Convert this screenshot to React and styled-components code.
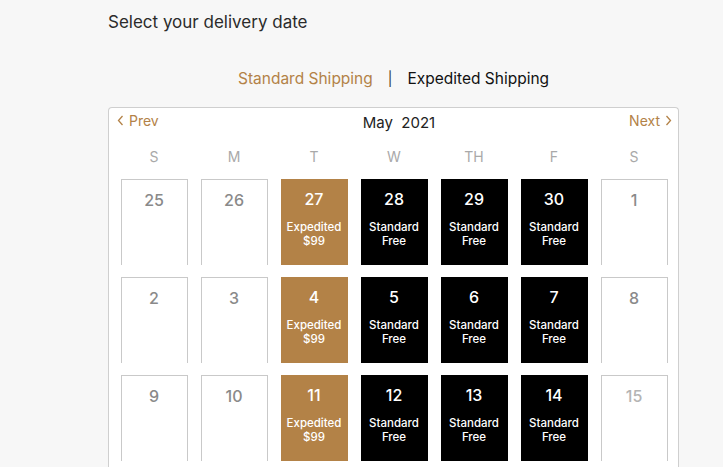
import React from 'react';
import styled, { createGlobalStyle } from 'styled-components';

const GlobalStyle = createGlobalStyle`
  body {
    margin: 0;
    background: #f7f7f7;
    font-family: Inter, "Liberation Sans", sans-serif;
    overflow: hidden;
  }
`;

const GOLD = '#b38247';

const weekDays = ['S', 'M', 'T', 'W', 'TH', 'F', 'S'];

const weeks = [
  [25, 26, 27, 28, 29, 30, 1],
  [2, 3, 4, 5, 6, 7, 8],
  [9, 10, 11, 12, 13, 14, 15],
];

const kindFor = (col) => {
  if (col === 2) return 'expedited';
  if (col >= 3 && col <= 5) return 'standard';
  return 'empty';
};

const Chevron = ({ dir }) => (
  <svg width="7" height="11" viewBox="0 0 7 11">
    <polyline
      points={dir === 'left' ? '5.5,1 1.5,5.5 5.5,10' : '1.5,1 5.5,5.5 1.5,10'}
      fill="none"
      stroke={GOLD}
      strokeWidth="1.3"
    />
  </svg>
);

const App = () => {
  return (
    <Page>
      <GlobalStyle />
      <Title>Select your delivery date</Title>
      <Tabs>
        <Tab active>Standard Shipping</Tab>
        <Divider>|</Divider>
        <Tab>Expedited Shipping</Tab>
      </Tabs>
      <Card>
        <Header>
          <NavLink>
            <Chevron dir="left" /> Prev
          </NavLink>
          <Month>May&nbsp;&nbsp;2021</Month>
          <NavLink>
            Next <Chevron dir="right" />
          </NavLink>
        </Header>
        <Grid>
          {weekDays.map((d, i) => (
            <DayLabel key={'d' + i}>{d}</DayLabel>
          ))}
          {weeks.map((week) =>
            week.map((day, col) => {
              const kind = kindFor(col);
              return (
                <Cell key={day} kind={kind}>
                  <DayNum faded={day === 15}>{day}</DayNum>
                  {kind === 'expedited' && (
                    <Note>
                      Expedited
                      <br />
                      $99
                    </Note>
                  )}
                  {kind === 'standard' && (
                    <Note>
                      Standard
                      <br />
                      Free
                    </Note>
                  )}
                </Cell>
              );
            })
          )}
        </Grid>
      </Card>
    </Page>
  );
};

const Page = styled.div`
  padding: 12px 0 0 108px;
  width: 571px;
`;

const Title = styled.h1`
  margin: 0;
  font-size: 17px;
  line-height: 20px;
  font-weight: 400;
  color: #2b2b2b;
`;

const Tabs = styled.div`
  margin-top: 37px;
  display: flex;
  justify-content: center;
  align-items: center;
  gap: 15px;
  font-size: 15.5px;
  line-height: 20px;
`;

const Tab = styled.span`
  color: ${(p) => (p.active ? GOLD : '#111')};
`;

const Divider = styled.span`
  color: #333;
  font-size: 14px;
`;

const Card = styled.div`
  margin-top: 18px;
  height: 360px;
  background: #fff;
  border: 1px solid #cfcfcf;
  border-bottom: none;
  border-radius: 4px 4px 0 0;
  padding: 3px 5px 0;
`;

const Header = styled.div`
  display: flex;
  justify-content: space-between;
  align-items: center;
  height: 22px;
  padding: 0 1px 0 3px;
`;

const NavLink = styled.span`
  display: flex;
  align-items: center;
  gap: 5px;
  color: ${GOLD};
  font-size: 14px;
  line-height: 20px;
  margin-top: -3px;
`;

const Month = styled.span`
  font-size: 15px;
  color: #222;
  margin-left: 10px;
`;

const Grid = styled.div`
  margin-top: 14px;
  display: grid;
  grid-template-columns: repeat(7, 80px);
  row-gap: 12px;
`;

const DayLabel = styled.div`
  text-align: center;
  font-size: 14px;
  line-height: 20px;
  color: #a9a9a9;
`;

const Cell = styled.div`
  justify-self: center;
  box-sizing: border-box;
  width: 67px;
  height: 86px;
  padding-top: 10px;
  text-align: center;
  background: ${(p) =>
    p.kind === 'expedited' ? GOLD : p.kind === 'standard' ? '#000' : '#fff'};
  border: ${(p) => (p.kind === 'empty' ? '1px solid #c9c9c9' : 'none')};
  border-bottom: none;
  color: ${(p) => (p.kind === 'empty' ? '#8a8a8a' : '#fff')};
`;

const DayNum = styled.div`
  font-size: 16px;
  line-height: 20px;
  font-weight: 500;
  ${(p) => p.faded && 'color: #b4b4b4;'}
`;

const Note = styled.div`
  margin-top: 11px;
  font-size: 11.5px;
  line-height: 14px;
  font-weight: 500;
`;

export default App;
